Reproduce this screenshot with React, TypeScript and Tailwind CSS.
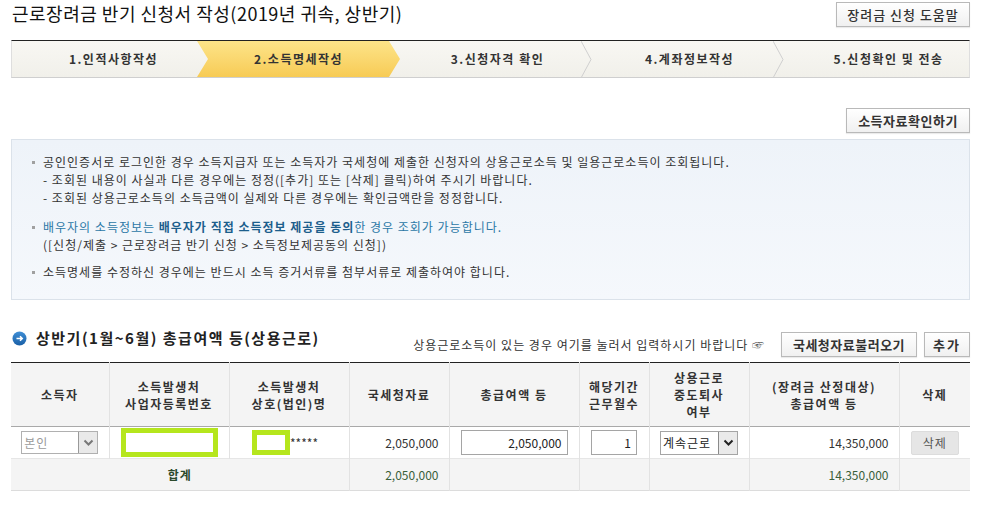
import React from "react";

function Sep() {
  return (
    <svg width="11" height="37" viewBox="0 0 11 37" className="shrink-0">
      <polyline points="0,0 10,18.5 0,37" fill="none" stroke="#cfcfcf" strokeWidth="1" />
    </svg>
  );
}

function Chevron({ color }: { color: string }) {
  return (
    <svg width="11" height="8" viewBox="0 0 11 8">
      <polyline points="1.5,1.5 5.5,5.5 9.5,1.5" fill="none" stroke={color} strokeWidth="2" />
    </svg>
  );
}

function Btn({ children, className = "" }: { children: React.ReactNode; className?: string }) {
  return (
    <button
      className={
        "h-[25px] border border-[#b9b9b9] bg-gradient-to-b from-white to-[#f0f0f0] text-[13px] font-bold text-[#333] leading-none shadow-[0_1px_1px_rgba(0,0,0,0.08)] " +
        className
      }
    >
      {children}
    </button>
  );
}

function Bullet() {
  return <span className="mt-[8px] mr-[8px] h-[3px] w-[3px] shrink-0 bg-[#a0a0a0]" />;
}

export default function App() {
  return (
    <div className="h-[505px] w-[982px] overflow-hidden bg-white pl-[11px] pr-[12px] font-['Noto_Sans_CJK_KR','Liberation_Sans',sans-serif] text-[12px] text-[#333]">
      {/* title */}
      <div className="flex h-[40px] items-start justify-between pt-[2px]">
        <h1 className="pl-[1px] text-[18px] leading-[22px] font-normal tracking-[0.5px] text-[#111]">
          근로장려금 반기 신청서 작성(2019년 귀속, 상반기)
        </h1>
        <Btn className="w-[134px] font-medium tracking-[1px]">장려금 신청 도움말</Btn>
      </div>

      {/* steps */}
      <div className="flex h-[38px] border-t border-t-[#222] border-b border-b-[#cfcfcf] border-x border-x-[#dedede] bg-gradient-to-b from-[#f8f7f3] to-[#f1f0ea] text-[12px] font-bold tracking-[1.5px] text-[#333]">
        <div className="flex w-[185px] items-center justify-center pl-[18px]">1.인적사항작성</div>
        <div className="flex w-[203px] shrink-0 items-center justify-center bg-gradient-to-b from-[#fde488] to-[#f7cb54] [clip-path:polygon(0_0,192px_0,203px_50%,192px_100%,0_100%,11px_50%)]">
          2.소득명세작성
        </div>
        <div className="flex w-[181px] items-center justify-center pl-[14px]">3.신청자격 확인</div>
        <Sep />
        <div className="flex w-[181px] items-center justify-center pl-[14px]">4.계좌정보작성</div>
        <Sep />
        <div className="flex flex-1 items-center justify-center pl-[24px]">5.신청확인 및 전송</div>
      </div>

      <div className="mt-[30px] flex justify-end">
        <Btn className="w-[124px] tracking-[0.5px]">소득자료확인하기</Btn>
      </div>

      {/* info box */}
      <div className="mt-[6px] h-[161px] border border-[#dbe2ea] bg-gradient-to-b from-[#eef3f9] to-[#f5f8fc] pt-[13px] pl-[20px] leading-[18px] tracking-[1px]">
        <div className="flex">
          <Bullet />
          <div>
            <p>공인인증서로 로그인한 경우 소득지급자 또는 소득자가 국세청에 제출한 신청자의 상용근로소득 및 일용근로소득이 조회됩니다.</p>
            <p>- 조회된 내용이 사실과 다른 경우에는 정정([추가] 또는 [삭제] 클릭)하여 주시기 바랍니다.</p>
            <p>- 조회된 상용근로소득의 소득금액이 실제와 다른 경우에는 확인금액란을 정정합니다.</p>
          </div>
        </div>
        <div className="mt-[11px] flex">
          <Bullet />
          <div>
            <p className="text-[#2b78a6]">
              배우자의 소득정보는 <b className="text-[#1c5e8c]">배우자가 직접 소득정보 제공을 동의</b>한 경우 조회가 가능합니다.
            </p>
            <p>([신청/제출 &gt; 근로장려금 반기 신청 &gt; 소득정보제공동의 신청])</p>
          </div>
        </div>
        <div className="mt-[9px] flex">
          <Bullet />
          <p>소득명세를 수정하신 경우에는 반드시 소득 증거서류를 첨부서류로 제출하여야 합니다.</p>
        </div>
      </div>

      {/* section header */}
      <div className="mt-[28px] flex h-[29px] justify-between">
        <div className="flex h-[20px] items-center pl-[1px]">
          <svg width="15" height="15" viewBox="0 0 15 15" className="mr-[9px]">
            <defs>
              <linearGradient id="cb" x1="0" y1="0" x2="0" y2="1">
                <stop offset="0" stopColor="#3f8fd6" />
                <stop offset="1" stopColor="#1a5fa6" />
              </linearGradient>
            </defs>
            <circle cx="7.5" cy="7.5" r="7" fill="url(#cb)" />
            <path d="M4.5 7.5h5.5M8 5.2l2.3 2.3L8 9.8" fill="none" stroke="#fff" strokeWidth="1.5" />
          </svg>
          <h2 className="text-[15px] font-bold tracking-[1.5px] text-[#222]">상반기(1월~6월) 총급여액 등(상용근로)</h2>
        </div>
        <div className="flex items-center self-end">
          <span className="mr-[16px] tracking-[1px] text-[#333]">
            상용근로소득이 있는 경우 여기를 눌러서 입력하시기 바랍니다 <span className="text-[#555]">☞</span>
          </span>
          <Btn className="w-[136px] tracking-[0.5px]">국세청자료불러오기</Btn>
          <Btn className="ml-[7px] w-[46px] tracking-[2px]">추가</Btn>
        </div>
      </div>

      {/* table */}
      <table className="mt-[5px] w-full table-fixed border-collapse border-t border-t-[#222] text-[12px]">
        <colgroup>
          <col className="w-[98px]" />
          <col className="w-[120px]" />
          <col className="w-[120px]" />
          <col className="w-[100px]" />
          <col className="w-[130px]" />
          <col className="w-[70px]" />
          <col className="w-[100px]" />
          <col className="w-[150px]" />
          <col />
        </colgroup>
        <thead>
          <tr className="h-[64px] border-b border-b-[#a9a9a9] bg-[#f4f4f4] text-center font-bold leading-[17px] tracking-[1.5px] text-[#333]">
            <th className="border-r border-r-[#e2e2e2]">소득자</th>
            <th className="border-r border-r-[#e2e2e2]">
              소득발생처
              <br />
              사업자등록번호
            </th>
            <th className="border-r border-r-[#e2e2e2]">
              소득발생처
              <br />
              상호(법인)명
            </th>
            <th className="border-r border-r-[#e2e2e2]">국세청자료</th>
            <th className="border-r border-r-[#e2e2e2]">총급여액 등</th>
            <th className="border-r border-r-[#e2e2e2]">
              해당기간
              <br />
              근무월수
            </th>
            <th className="border-r border-r-[#e2e2e2]">
              상용근로
              <br />
              중도퇴사
              <br />
              여부
            </th>
            <th className="border-r border-r-[#e2e2e2]">
              (장려금 산정대상)
              <br />
              총급여액 등
            </th>
            <th>삭제</th>
          </tr>
        </thead>
        <tbody>
          <tr className="h-[32px] border-b border-b-[#e6e6e6] bg-white">
            <td className="border-r border-r-[#e2e2e2]">
              <div className="mx-auto flex h-[23px] w-[77px] items-center border border-[#b0b0b0] bg-white">
                <span className="flex-1 pl-[2px] tracking-[1px] text-[#9a9a9a]">본인</span>
                <span className="flex h-[21px] w-[19px] items-center justify-center border-l border-l-[#999] bg-[#e9e9e9]">
                  <Chevron color="#777" />
                </span>
              </div>
            </td>
            <td className="border-r border-r-[#e2e2e2]">
              <div className="mx-auto h-[29px] w-[97px] border-[5px] border-[#b5e61d] bg-white" />
            </td>
            <td className="border-r border-r-[#e2e2e2]">
              <div className="flex items-center justify-center pr-[8px]">
                <div className="h-[25px] w-[38px] border-[5px] border-[#b5e61d] bg-white" />
                <span className="text-[#333]">*****</span>
              </div>
            </td>
            <td className="border-r border-r-[#e2e2e2] pr-[10px] text-right">2,050,000</td>
            <td className="border-r border-r-[#e2e2e2]">
              <div className="mx-auto flex h-[25px] w-[107px] items-center justify-end border border-[#a5a5a5] pr-[5px] text-[#222]">
                2,050,000
              </div>
            </td>
            <td className="border-r border-r-[#e2e2e2]">
              <div className="mx-auto flex h-[25px] w-[46px] items-center justify-end border border-[#a5a5a5] pr-[5px] text-[#222]">
                1
              </div>
            </td>
            <td className="border-r border-r-[#e2e2e2]">
              <div className="mx-auto flex h-[24px] w-[78px] items-center border border-[#a5a5a5] bg-white">
                <span className="flex-1 pl-[2px] tracking-[1px] text-[#222]">계속근로</span>
                <span className="flex h-[22px] w-[19px] items-center justify-center border-l border-l-[#8a8a8a] bg-[#eaeaea]">
                  <Chevron color="#222" />
                </span>
              </div>
            </td>
            <td className="border-r border-r-[#e2e2e2] pr-[10px] text-right">14,350,000</td>
            <td>
              <div className="mx-auto flex h-[24px] w-[48px] items-center justify-center rounded-[2px] border border-[#dcdcdc] bg-[#e6e6e6] tracking-[1px] text-[#555]">
                삭제
              </div>
            </td>
          </tr>
          <tr className="h-[32px] border-b border-b-[#dcdcdc] bg-[#f4f4f4] text-[#3a5f3a]">
            <td colSpan={3} className="border-r border-r-[#e2e2e2] text-center font-bold tracking-[1px] text-[#2c4a2c]">
              합계
            </td>
            <td className="border-r border-r-[#e2e2e2] pr-[10px] text-right">2,050,000</td>
            <td className="border-r border-r-[#e2e2e2]" />
            <td className="border-r border-r-[#e2e2e2]" />
            <td className="border-r border-r-[#e2e2e2]" />
            <td className="border-r border-r-[#e2e2e2] pr-[10px] text-right">14,350,000</td>
            <td />
          </tr>
        </tbody>
      </table>
    </div>
  );
}
